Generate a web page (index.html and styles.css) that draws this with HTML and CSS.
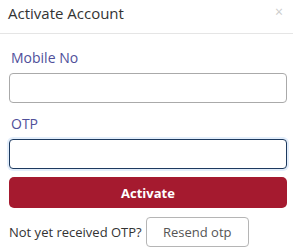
FILE: index.html
```html
<!DOCTYPE html>
<html lang="en">
<head>
    <meta charset="UTF-8">
    <meta name="viewport" content="width=device-width, initial-scale=1.0">
    <title>Activate Account</title>
    <link rel="stylesheet" href="styles.css">
</head>
<body>
    <div class="modal">
        <div class="modal-header">
            <h4>Activate Account</h4>
            <span class="close">&times;</span>
        </div>
        <div class="modal-body">
            <div class="field">
                <label>Mobile No</label>
                <input type="text" class="input">
            </div>
            <div class="field">
                <label>OTP</label>
                <input type="text" class="input focus">
            </div>
            <button class="btn-activate">Activate</button>
            <div class="resend-row">
                <span>Not yet received OTP?</span>
                <button class="btn-resend">Resend otp</button>
            </div>
        </div>
    </div>
</body>
</html>
```

FILE: styles.css
```css
* {
    margin: 0;
    padding: 0;
    box-sizing: border-box;
}

body {
    font-family: 'Open Sans', 'Liberation Sans', sans-serif;
    background: white;
    color: #333;
}

.modal {
    width: 296px;
    height: 251px;
    background: white;
}

.modal-header {
    display: flex;
    justify-content: space-between;
    align-items: flex-start;
    height: 34px;
    padding: 2px 10px 0 8px;
    border-bottom: 1px solid #e5e5e5;
    margin-right: 3px;
}

.modal-header h4 {
    font-size: 15px;
    font-weight: normal;
    color: #333;
    line-height: 22px;
}

.close {
    font-size: 14px;
    color: #ccc;
    line-height: 16px;
    margin-top: 2px;
}

.modal-body {
    padding: 14px 9px 0 9px;
}

.field {
    margin-bottom: 8px;
}

.field:first-child {
    margin-bottom: 11px;
}

.field label {
    display: block;
    font-size: 14px;
    line-height: 19px;
    color: #4f4f9a;
    padding-left: 2px;
    margin-bottom: 6px;
}

.input {
    display: block;
    width: 100%;
    height: 30px;
    border: 1px solid #aaa;
    border-radius: 4px;
    background: white;
    outline: none;
}

.input.focus {
    border-color: #1d3a5f;
    box-shadow: 0 0 0 2px #e3eefb;
}

.btn-activate {
    display: block;
    width: 100%;
    height: 31px;
    background: #a51a2f;
    color: white;
    border: none;
    border-radius: 5px;
    font-family: inherit;
    font-size: 13px;
    font-weight: bold;
}

.resend-row {
    display: flex;
    align-items: center;
    gap: 4px;
    margin-top: 9px;
    font-size: 13px;
}

.btn-resend {
    width: 103px;
    height: 30px;
    background: white;
    border: 1px solid #b5b5b5;
    border-radius: 4px;
    font-family: inherit;
    font-size: 13px;
    color: #555;
}
```
